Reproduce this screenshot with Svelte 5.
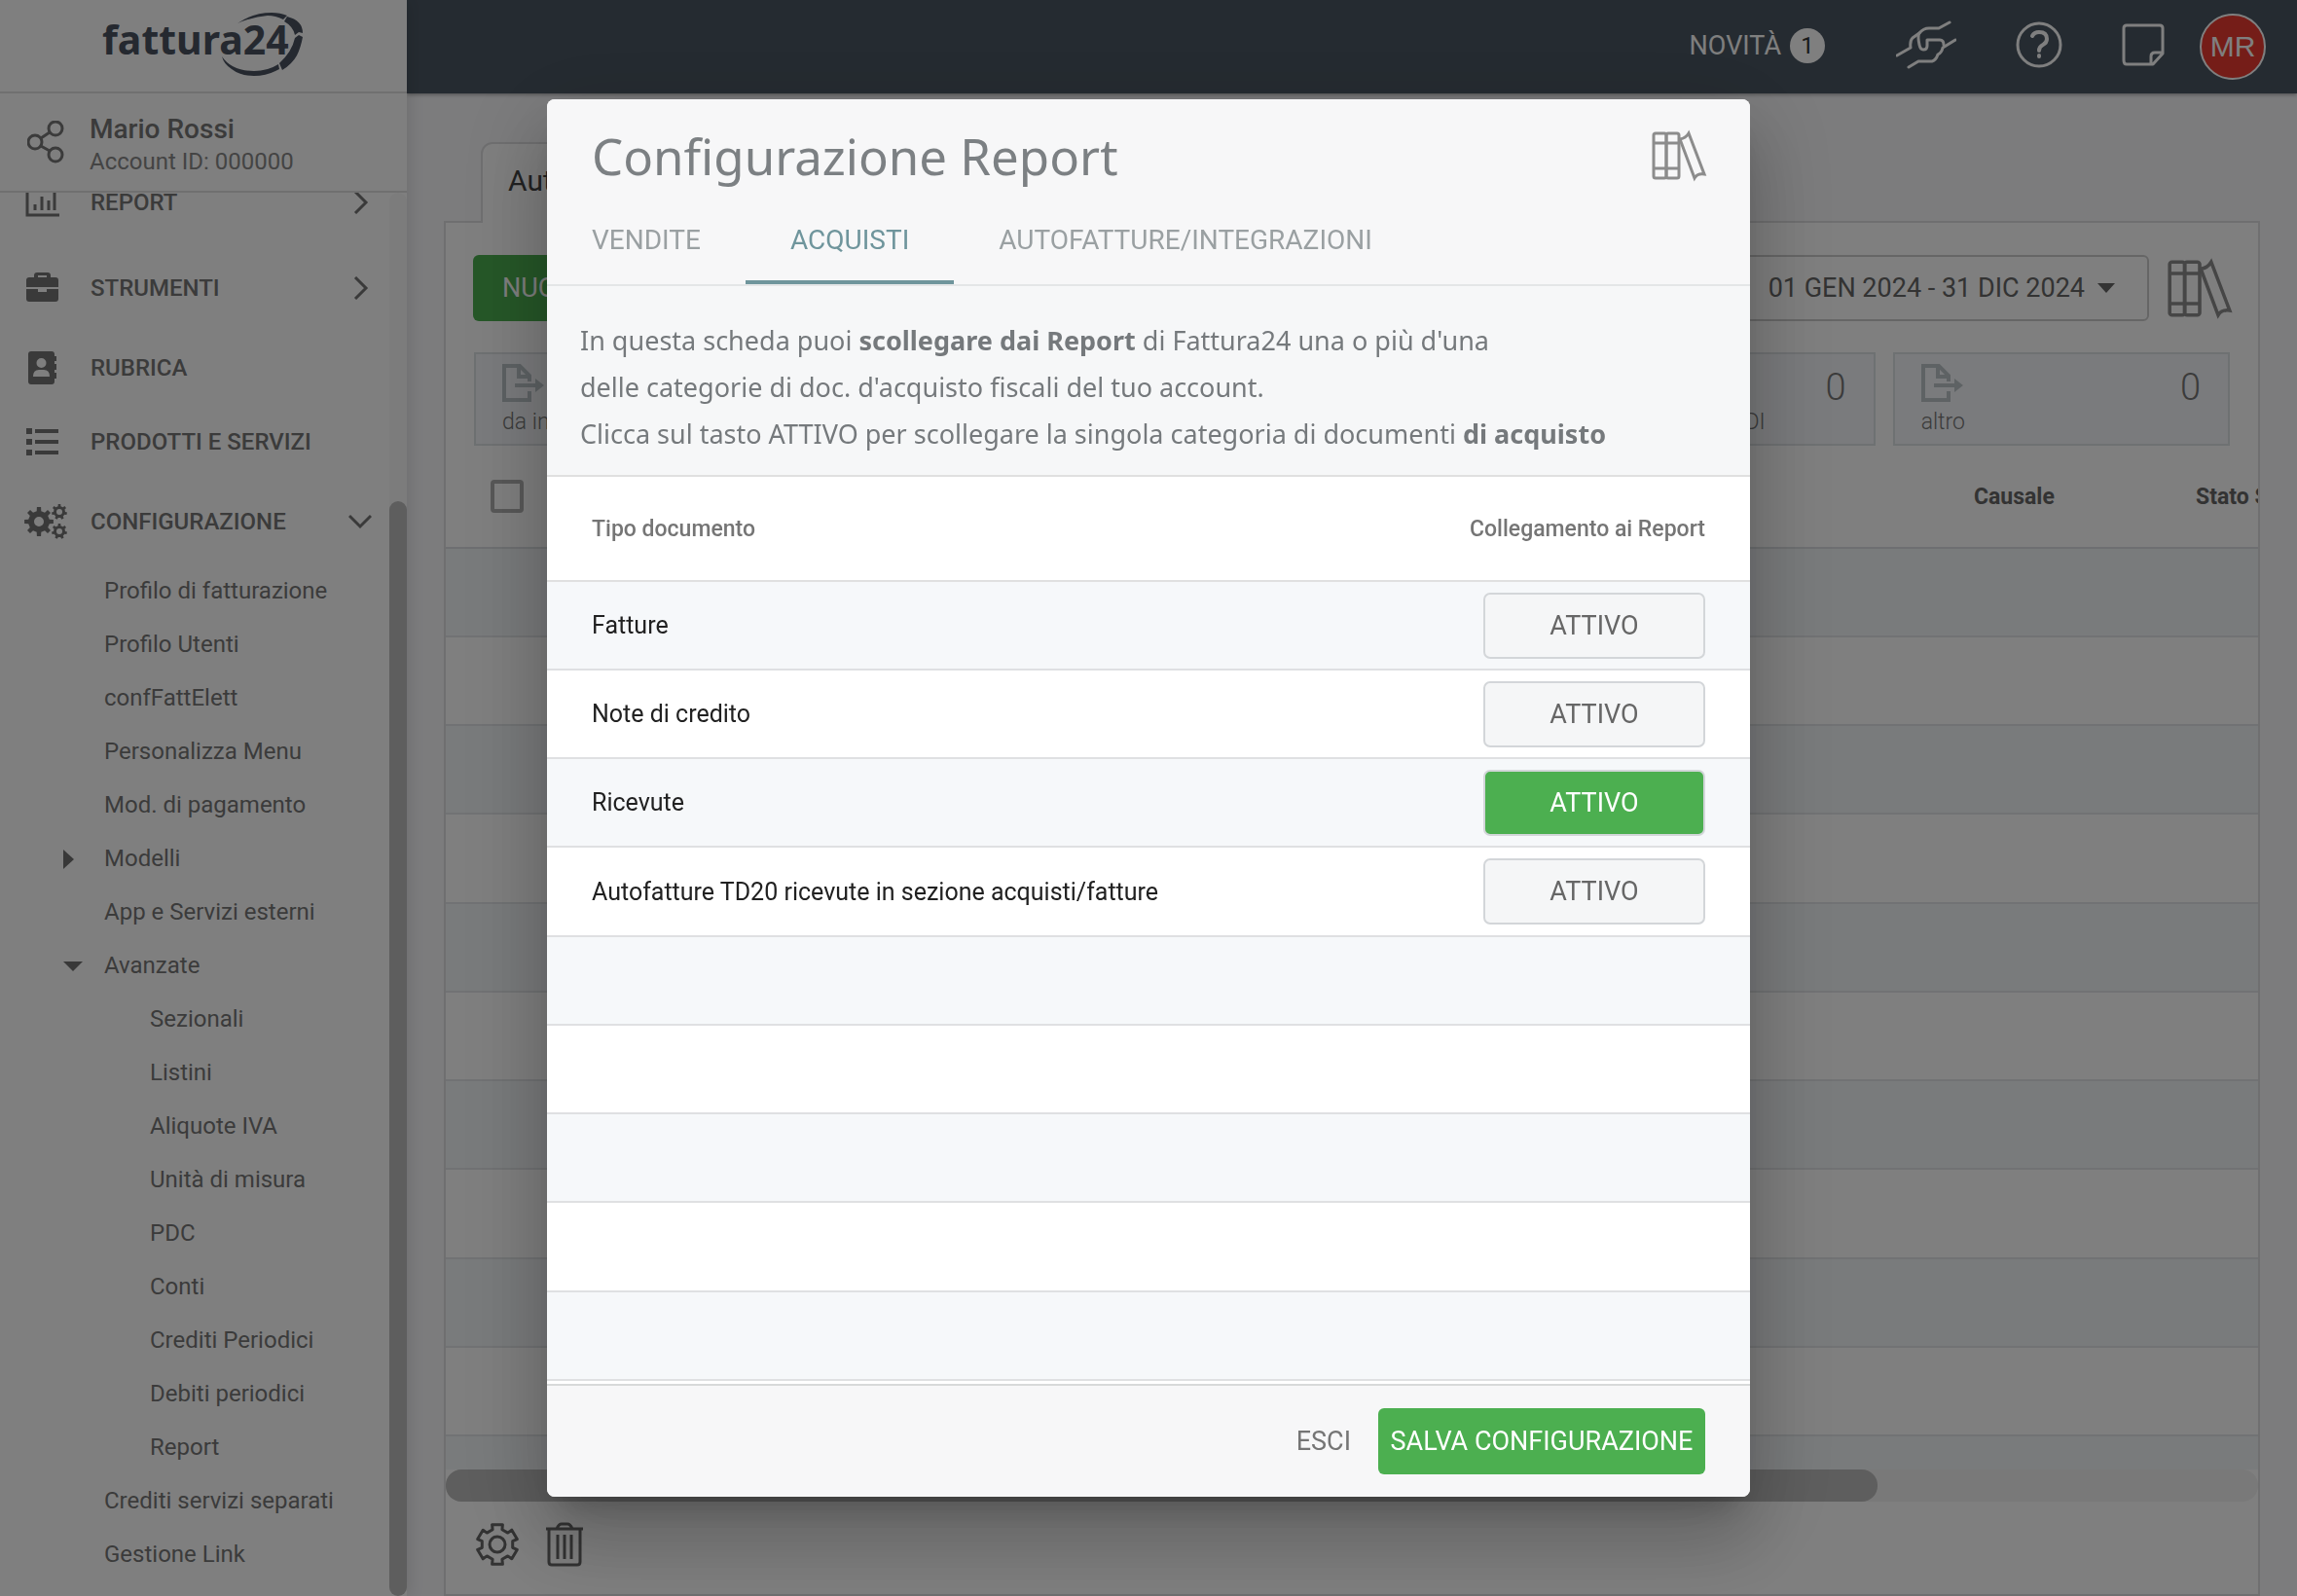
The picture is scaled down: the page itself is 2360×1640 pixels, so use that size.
<script lang="ts">
    interface DocType {
        label: string;
        active: boolean;
    }

    let tabs = ['VENDITE', 'ACQUISTI', 'AUTOFATTURE/INTEGRAZIONI'];
    let currentTab = $state('ACQUISTI');

    let docTypes: DocType[] = $state([
        { label: 'Fatture', active: false },
        { label: 'Note di credito', active: false },
        { label: 'Ricevute', active: true },
        { label: 'Autofatture TD20 ricevute in sezione acquisti/fatture', active: false },
    ]);

    // The table always shows at least nine rows
    let fillerRows = $derived(Array(Math.max(0, 9 - docTypes.length)).fill(0));

    const menu = [
        { label: 'REPORT', icon: 'chart', arrow: 'right' },
        { label: 'STRUMENTI', icon: 'case', arrow: 'right' },
        { label: 'RUBRICA', icon: 'book', arrow: '' },
        { label: 'PRODOTTI E SERVIZI', icon: 'list', arrow: '' },
        { label: 'CONFIGURAZIONE', icon: 'cogs', arrow: 'down' },
    ];

    const submenu = [
        { label: 'Profilo di fatturazione' },
        { label: 'Profilo Utenti' },
        { label: 'confFattElett' },
        { label: 'Personalizza Menu' },
        { label: 'Mod. di pagamento' },
        { label: 'Modelli', caret: 'right' },
        { label: 'App e Servizi esterni' },
        { label: 'Avanzate', caret: 'down' },
        { label: 'Sezionali', nested: true },
        { label: 'Listini', nested: true },
        { label: 'Aliquote IVA', nested: true },
        { label: 'Unità di misura', nested: true },
        { label: 'PDC', nested: true },
        { label: 'Conti', nested: true },
        { label: 'Crediti Periodici', nested: true },
        { label: 'Debiti periodici', nested: true },
        { label: 'Report', nested: true },
        { label: 'Crediti servizi separati' },
        { label: 'Gestione Link' },
    ];

    const counters = [
        { label: 'da inviare' },
        {},
        {},
        { label: 'in elaborazione - SDI', count: 0 },
        { label: 'altro', count: 0 },
    ];

    const emptyRows = Array(12).fill(0);

    // Outline of a toothed wheel, first tooth pointing up
    function gear(cx: number, cy: number, outer: number, inner: number, teeth: number, tip = 0.18, base = 0.27) {
        const step = (Math.PI * 2) / teeth;
        const points: string[] = [];
        for (let i = 0; i < teeth; i++) {
            const a = i * step - Math.PI / 2;
            for (const [r, d] of [
                [inner, -base],
                [outer, -tip],
                [outer, tip],
                [inner, base],
            ]) {
                const x = cx + r * Math.cos(a + d * step);
                const y = cy + r * Math.sin(a + d * step);
                points.push(`${x.toFixed(1)},${y.toFixed(1)}`);
            }
        }
        return 'M' + points.join('L') + 'Z';
    }

    function hole(cx: number, cy: number, r: number) {
        return `M${cx - r},${cy}a${r},${r} 0 1,0 ${2 * r},0a${r},${r} 0 1,0 ${-2 * r},0Z`;
    }
</script>

{#snippet binders(size)}
    <svg class="binders {size}" viewBox="0 0 54 48" aria-hidden="true">
        <rect x="1" y="1" width="13" height="46" rx="2" />
        <rect x="14" y="1" width="13" height="46" rx="2" />
        <path d="M1 11H27M1 37H27" />
        <path d="M28 7Q34 6 37 1L53 43Q46 42 43 47Z" />
    </svg>
{/snippet}

<div class="app">
    <aside class="sidebar">
        <div class="brand">
            <svg viewBox="0 0 210 70" role="img" aria-label="fattura24">
                <text x="5" y="48">fattura24</text>
                <path d="M144 16Q160 5 179 5Q188 5 195 8L191 12Q183 8 175 8Q160 9 144 16Z" />
                <path d="M195 9Q211 13 211 26L207 25L203 28Q201 19 192 14Z" />
                <path d="M203 31L207 28L211 30Q209 41 205 49Q200 58 190 64L187 57Q200 45 203 31Z" />
                <path d="M187 63L183 65Q173 70 161 70Q147 70 138 63Q130 58 128 50Q138 65 161 65Q175 65 186 58Z" />
            </svg>
        </div>
        <div class="account">
            <svg class="share" viewBox="0 0 38 44" aria-hidden="true">
                <circle cx="8" cy="22" r="7" />
                <circle cx="29" cy="8" r="7" />
                <circle cx="29" cy="35" r="7" />
                <path d="M14 18L23 12M14 26L23 31" />
            </svg>
            <div class="owner">
                <div class="name">Mario Rossi</div>
                <div class="id">Account ID: 000000</div>
            </div>
        </div>
        <div class="scroller">
            <nav>
                {#each menu as item}
                    <a class="item" class:tall={item.arrow} href="#{item.icon}">
                        <svg class="icon" viewBox="0 0 44 36" aria-hidden="true">
                            {#if item.icon === 'chart'}
                                <path class="line" d="M3 2V31H36M11 20V26M18 12V26M25 16V26M31 8V26" />
                            {:else if item.icon === 'case'}
                                <path d="M2 10Q2 7 5 7H10V5Q10 2 13 2H24Q27 2 27 5V7H32Q35 7 35 10V17H2ZM14 7H23V5H14Z" fill-rule="evenodd" />
                                <path d="M2 19H14V22H23V19H35V29Q35 32 32 32H5Q2 32 2 29Z" />
                            {:else if item.icon === 'book'}
                                <path fill-rule="evenodd" d="M7 1H28Q31 1 31 4V6H33V11H31V14H33V20H31V23H33V29H31V32Q31 35 28 35H7Q4 35 4 32V4Q4 1 7 1ZM17.500 8A5 5 0 1 0 17.500 18A5 5 0 1 0 17.500 8ZM9 27H26Q26 20 20 20H15Q9 20 9 27Z" />
                            {:else if item.icon === 'list'}
                                <path d="M2 4H8V10H2ZM2 15H8V21H2ZM2 26H8V32H2ZM11 5H35V9H11ZM11 16H35V20H11ZM11 27H35V31H11Z" />
                            {:else}
                                <path fill-rule="evenodd" d={gear(15, 18, 15, 11, 8) + hole(15, 18, 5)} />
                                <path fill-rule="evenodd" d={gear(36, 8, 8, 6, 7) + hole(36, 8, 3)} />
                                <path fill-rule="evenodd" d={gear(36, 28, 8, 6, 7) + hole(36, 28, 3)} />
                            {/if}
                        </svg>
                        <span>{item.label}</span>
                        {#if item.arrow}
                            <svg class="arrow" viewBox="0 0 24 24" aria-hidden="true">
                                <path d={item.arrow === 'right' ? 'M7 1L18 12L7 23' : 'M1 6L12 17L23 6'} />
                            </svg>
                        {/if}
                    </a>
                {/each}
                {#each submenu as item}
                    <a class="sub" class:nested={item.nested} href="#{item.label}">
                        {#if item.caret}
                            <svg class="caret" viewBox="0 0 20 20" aria-hidden="true">
                                <path d={item.caret === 'right' ? 'M0 0L11 10L0 20Z' : 'M0 5H20L10 15Z'} />
                            </svg>
                        {/if}
                        {item.label}
                    </a>
                {/each}
            </nav>
            <div class="track"><div class="thumb"></div></div>
        </div>
    </aside>

    <div class="page">
        <header class="topbar">
            <button class="news">NOVITÀ <span class="badge">1</span></button>
            <div class="actions">
                <button aria-label="Assistenza">
                    <svg width="62" height="50" viewBox="0 0 62 50">
                        <path d="M55 2L44 8H34Q28 8 24 13L17 18Q14 21 15 28L1 36" />
                        <path d="M24 13Q22 16 24 25Q25 30 28 30Q32 30 32 26V20H45Q49 20 49 25" />
                        <path d="M61 20L48 28Q47 33 43 35Q41 41 37 42H23L13 48" />
                    </svg>
                </button>
                <button aria-label="Aiuto">
                    <svg width="48" height="48" viewBox="0 0 48 48">
                        <circle cx="24" cy="24" r="22" />
                        <path class="bold" d="M17 15Q19 11 24 11Q32 11 32 18Q32 22 28 24Q24 26 24 30M24 35V36" />
                    </svg>
                </button>
                <button aria-label="Note">
                    <svg width="44" height="44" viewBox="0 0 44 44">
                        <path d="M5 2H39Q42 2 42 5V31L32 42H5Q2 42 2 38V5Q2 2 5 2ZM42 30H34Q30 30 30 34V42" />
                    </svg>
                </button>
            </div>
            <button class="avatar">MR</button>
        </header>

        <main>
            <h2 class="page-tab">Autofatture</h2>
            <section class="panel">
                <div class="toolbar">
                    <button class="new">NUOVO</button>
                    <button class="period">
                        01 GEN 2024 - 31 DIC 2024
                        <svg viewBox="0 0 20 10" aria-hidden="true"><path d="M1 0H19L10 10Z" /></svg>
                    </button>
                    {@render binders('large')}
                </div>
                <div class="counters">
                    {#each counters as counter}
                        <div class="counter">
                            {#if counter.label}
                                <div>
                                    <svg viewBox="0 0 44 40" aria-hidden="true">
                                        <path d="M28 28V37H2V2H18L28 12V18M17 2V13H28M13 22H36" />
                                        <path class="head" d="M34 15L43 22L34 29Z" />
                                    </svg>
                                    <div class="label">{counter.label}</div>
                                </div>
                                <div class="count">{counter.count}</div>
                            {/if}
                        </div>
                    {/each}
                </div>
                <div class="grid">
                    <table>
                        <thead>
                            <tr>
                                <th class="check"><input type="checkbox" aria-label="Seleziona tutto" /></th>
                                <th class="wide"></th>
                                <th class="cause">Causale</th>
                                <th>Stato SdI</th>
                            </tr>
                        </thead>
                        <tbody>
                            {#each emptyRows as _}
                                <tr><td colspan="4"></td></tr>
                            {/each}
                        </tbody>
                    </table>
                </div>
                <div class="hscroll"><div class="hthumb"></div></div>
                <div class="panel-foot">
                    <button aria-label="Impostazioni">
                        <svg width="46" height="46" viewBox="0 0 46 46">
                            <path d={gear(23, 23, 21, 16, 6, 0.25, 0.3)} />
                            <circle cx="23" cy="23" r="8" />
                        </svg>
                    </button>
                    <button aria-label="Elimina">
                        <svg width="38" height="46" viewBox="0 0 38 46">
                            <path d="M0 7H38M3 7V41Q3 44 6 44H32Q35 44 35 41V7M11 7Q13 2 16 2H22Q25 2 27 7M12 13V38M19 13V38M26 13V38" />
                        </svg>
                    </button>
                </div>
            </section>
        </main>
    </div>
</div>

<div class="overlay">
    <div class="dialog" role="dialog" aria-modal="true" aria-labelledby="dialog-title">
        <header>
            <div class="title">
                <h1 id="dialog-title">Configurazione Report</h1>
                {@render binders('small')}
            </div>
            <div class="tabs" role="tablist">
                {#each tabs as tab}
                    <button
                        role="tab"
                        aria-selected={tab === currentTab}
                        class:current={tab === currentTab}
                        onclick={() => (currentTab = tab)}
                    >
                        {tab}
                    </button>
                {/each}
            </div>
        </header>
        <p class="intro">
            In questa scheda puoi <b>scollegare dai Report</b> di Fattura24 una o più d'una<br />
            delle categorie di doc. d'acquisto fiscali del tuo account.<br />
            Clicca sul tasto ATTIVO per scollegare la singola categoria di documenti <b>di acquisto</b>
        </p>
        <table class="docs">
            <thead>
                <tr>
                    <th>Tipo documento</th>
                    <th class="link">Collegamento ai Report</th>
                </tr>
            </thead>
            <tbody>
                {#each docTypes as doc}
                    <tr>
                        <td>{doc.label}</td>
                        <td class="link">
                            <button class="toggle" class:on={doc.active} onclick={() => (doc.active = !doc.active)}>
                                ATTIVO
                            </button>
                        </td>
                    </tr>
                {/each}
                {#each fillerRows as _}
                    <tr><td colspan="2"></td></tr>
                {/each}
            </tbody>
        </table>
        <footer>
            <button class="cancel">ESCI</button>
            <button class="save">SALVA CONFIGURAZIONE</button>
        </footer>
    </div>
</div>

<style>
    :global(body) {
        margin: 0;
        font-family: Roboto, sans-serif;
        overflow: hidden;
    }

    * {
        box-sizing: border-box;
    }

    button {
        font: inherit;
        padding: 0;
        border: 0;
        background: none;
        color: inherit;
        cursor: pointer;
    }

    h1,
    h2,
    p {
        margin: 0;
        font-weight: 400;
    }

    a {
        color: inherit;
        text-decoration: none;
    }

    svg {
        display: block;
        flex: none;
    }

    table {
        border-collapse: separate;
        border-spacing: 0;
    }

    .app {
        display: flex;
        height: 100vh;
        background: #f8f8fb;
        color: #777;
    }

    /* sidebar */
    .sidebar {
        display: flex;
        flex-direction: column;
        flex: none;
        width: 418px;
        background: #fff;
        box-shadow: 2px 0 16px rgba(0, 0, 0, 0.12);
        z-index: 1;
    }

    .brand {
        height: 96px;
        flex: none;
        padding: 8px 0 0 100px;
        border-bottom: 2px solid #e0e0e0;
    }

    .brand svg {
        width: 210px;
        height: 70px;
        overflow: visible;
        fill: #4a5260;
    }

    .brand text {
        font: 700 41px 'Noto Sans', sans-serif;
    }

    .account {
        display: flex;
        align-items: center;
        gap: 26px;
        height: 102px;
        flex: none;
        padding-left: 28px;
        border-bottom: 2px solid #e0e0e0;
    }

    .share {
        width: 38px;
        height: 44px;
        fill: none;
        stroke: #777;
        stroke-width: 3;
    }

    .owner {
        padding-top: 6px;
    }

    .name {
        font-size: 28px;
        font-weight: 500;
        line-height: 34px;
    }

    .id {
        font-size: 24px;
        line-height: 32px;
        color: #888;
    }

    .scroller {
        display: flex;
        flex: 1;
        min-height: 0;
        overflow: hidden;
    }

    nav {
        flex: 1;
        margin-top: -34px;
        font-size: 24px;
    }

    .item {
        display: flex;
        align-items: center;
        height: 76px;
        padding: 0 18px 0 25px;
        font-weight: 500;
    }

    .item.tall {
        height: 88px;
    }

    .item span {
        flex: 1;
    }

    .icon {
        width: 44px;
        height: 36px;
        margin-right: 24px;
        fill: #757575;
    }

    .icon .line {
        fill: none;
        stroke: #757575;
        stroke-width: 3;
    }

    .arrow {
        width: 24px;
        height: 24px;
        fill: none;
        stroke: #757575;
        stroke-width: 3;
    }

    .sub {
        position: relative;
        display: block;
        padding-left: 107px;
        line-height: 55px;
        white-space: nowrap;
    }

    .sub.nested {
        padding-left: 154px;
    }

    .caret {
        position: absolute;
        left: 65px;
        top: 18px;
        width: 20px;
        height: 20px;
        fill: #707070;
    }

    .track {
        display: flex;
        flex-direction: column;
        justify-content: flex-end;
        width: 18px;
        background: #f8f8f8;
        border-radius: 9px;
    }

    .thumb {
        height: 78%;
        border-radius: 9px;
        background: #bcbcbc;
    }

    /* top bar */
    .page {
        display: flex;
        flex-direction: column;
        flex: 1;
        min-width: 0;
    }

    .topbar {
        display: flex;
        align-items: center;
        justify-content: flex-end;
        gap: 36px;
        height: 96px;
        flex: none;
        padding-right: 32px;
        background: #4b5763;
        box-shadow: 0 1px 4px rgba(0, 0, 0, 0.4);
        color: #fff;
        font-size: 27px;
    }

    .news {
        display: flex;
        align-items: center;
        gap: 9px;
        margin-right: 37px;
        padding-bottom: 2px;
    }

    .badge {
        width: 36px;
        height: 36px;
        border-radius: 50%;
        background: #fff;
        color: #333;
        font-size: 24px;
        line-height: 36px;
    }

    .actions {
        display: flex;
        align-items: center;
        gap: 61px;
        padding-bottom: 4px;
    }

    .actions svg {
        fill: none;
        stroke: #fff;
        stroke-width: 3;
        stroke-linecap: round;
        stroke-linejoin: round;
    }

    .actions .bold {
        stroke-width: 4;
    }

    .avatar {
        width: 68px;
        height: 68px;
        border: 2px solid #fff;
        border-radius: 50%;
        background: #ea3a30;
        font-family: 'Liberation Sans', sans-serif;
        font-size: 30px;
    }

    /* document list */
    main {
        display: flex;
        flex-direction: column;
        align-items: flex-start;
        flex: 1;
        min-height: 0;
        padding: 50px 38px 0;
    }

    .page-tab {
        z-index: 1;
        height: 83px;
        margin: 0 0 -2px 38px;
        padding: 0 26px;
        border: 2px solid #dedee0;
        border-bottom: 0;
        border-radius: 12px 12px 0 0;
        background: #fff;
        color: #444;
        font-size: 30px;
        line-height: 76px;
    }

    .panel {
        display: flex;
        flex-direction: column;
        flex: 1;
        min-height: 0;
        width: 100%;
        border: 2px solid #dedee0;
        background: #fff;
    }

    .toolbar {
        display: flex;
        align-items: center;
        gap: 20px;
        padding: 33px 28px 32px;
        font-size: 27px;
    }

    .new {
        height: 68px;
        margin-right: auto;
        padding: 0 30px;
        border-radius: 6px;
        background: #4caf50;
        color: #fff;
    }

    .period {
        display: flex;
        align-items: center;
        gap: 12px;
        height: 68px;
        padding: 0 32px;
        border: 2px solid #ccc;
        border-radius: 6px;
        color: #666;
    }

    .period svg {
        width: 20px;
        height: 10px;
        fill: #666;
    }

    .binders {
        fill: none;
        stroke: #8c8c8c;
        stroke-width: 3;
        overflow: visible;
    }

    .binders.small {
        width: 54px;
        height: 48px;
    }

    .binders.large {
        width: 64px;
        height: 57px;
    }

    .counters {
        display: flex;
        gap: 18px;
        padding: 0 29px;
    }

    .counter {
        display: flex;
        justify-content: space-between;
        flex: 1;
        height: 96px;
        padding: 10px 28px 0 27px;
        border: 2px solid #dde2e5;
        background: #f5f7fa;
    }

    .counter svg {
        width: 44px;
        height: 40px;
        fill: none;
        stroke: #bcc5c9;
        stroke-width: 4;
    }

    .counter .head {
        fill: #bcc5c9;
        stroke: none;
    }

    .label {
        font-size: 23px;
        font-weight: 300;
        line-height: 40px;
        white-space: nowrap;
    }

    .count {
        font-size: 38px;
        font-weight: 300;
        line-height: 48px;
    }

    .grid {
        flex: 1;
        min-height: 0;
        overflow: hidden;
    }

    .grid table {
        width: 125%;
        table-layout: fixed;
    }

    .grid th {
        height: 106px;
        padding: 0;
        border-bottom: 2px solid #dcdfe2;
        color: #666;
        font-size: 23px;
        font-weight: 700;
        text-align: left;
    }

    .grid .check {
        width: 110px;
        padding-left: 46px;
    }

    .grid .wide {
        width: 1460px;
    }

    .grid .cause {
        width: 228px;
    }

    .grid td {
        height: 91px;
        padding: 0;
        border-bottom: 2px solid #e2e5e8;
    }

    .grid tbody tr:nth-child(odd) {
        background: #f3f6f9;
    }

    .check input {
        display: block;
        appearance: none;
        width: 34px;
        height: 34px;
        margin: 0;
        border: 4px solid #b0b0b0;
        border-radius: 4px;
    }

    .hscroll {
        height: 33px;
        flex: none;
        border-radius: 16px;
        background: #f2f2f2;
    }

    .hthumb {
        width: 79%;
        height: 100%;
        border-radius: 16px;
        background: #bcbcbc;
    }

    .panel-foot {
        display: flex;
        align-items: center;
        gap: 27px;
        height: 95px;
        flex: none;
        padding: 0 0 8px 30px;
    }

    .panel-foot svg {
        fill: none;
        stroke: #666;
        stroke-width: 3;
        stroke-linejoin: round;
    }

    /* dialog */
    .overlay {
        position: fixed;
        inset: 0;
        z-index: 10;
        display: flex;
        align-items: center;
        justify-content: center;
        background: rgba(0, 0, 0, 0.5);
    }

    .dialog {
        width: 1236px;
        max-width: 90vw;
        overflow: hidden;
        border-radius: 8px;
        background: #fff;
        box-shadow:
            0 22px 30px -14px rgba(0, 0, 0, 0.2),
            0 48px 76px 6px rgba(0, 0, 0, 0.14),
            0 18px 92px 16px rgba(0, 0, 0, 0.12);
        color: #757575;
    }

    .dialog header {
        border-bottom: 2px solid #e4e6e7;
        background: #f7f7f8;
    }

    .title {
        display: flex;
        align-items: center;
        justify-content: space-between;
        height: 100px;
        padding: 16px 46px 0;
    }

    h1 {
        color: #7c8083;
        font-family: 'Noto Sans', sans-serif;
        font-size: 51px;
        line-height: 72px;
    }

    .tabs {
        display: flex;
    }

    .tabs button {
        height: 90px;
        padding: 2px 46px 0;
        border-bottom: 4px solid transparent;
        color: #9aa0a2;
        font-size: 28px;
    }

    .tabs .current {
        border-bottom-color: #6f959c;
        color: #6f959c;
    }

    .intro {
        padding: 32px 34px 18px;
        border-bottom: 2px solid #e0e0e0;
        background: #f6f7f8;
        color: #75797c;
        font-family: 'Noto Sans', sans-serif;
        font-size: 27px;
        line-height: 48px;
        white-space: nowrap;
    }

    .docs {
        width: 100%;
        margin-bottom: 3px;
    }

    .docs th {
        height: 108px;
        padding: 0 46px;
        border-bottom: 2px solid #e0e0e0;
        font-size: 23px;
        font-weight: 500;
        text-align: left;
    }

    .docs td {
        height: 91px;
        padding: 0 46px;
        border-bottom: 2px solid #dfe0e2;
        color: #212121;
        font-size: 25px;
    }

    .docs tr:nth-child(4n) td,
    .grid tr:nth-child(4n) td {
        height: 92px;
    }

    .docs tbody tr:nth-child(odd) {
        background: #f6f8fa;
    }

    .docs .link {
        text-align: right;
    }

    .toggle {
        display: block;
        width: 228px;
        height: 68px;
        margin-left: auto;
        border: 2px solid #d3d6d9;
        border-radius: 7px;
        background: #f5f6f7;
        color: #666;
        font-size: 27px;
    }

    .toggle.on {
        background: #4caf50;
        color: #fff;
    }

    .dialog footer {
        display: flex;
        align-items: center;
        justify-content: flex-end;
        gap: 28px;
        height: 116px;
        padding: 0 46px;
        border-top: 2px solid #d8d9d9;
        background: #f7f7f8;
        font-size: 27px;
    }

    .save {
        width: 336px;
        height: 68px;
        border-radius: 6px;
        background: #4caf50;
        color: #fff;
        white-space: nowrap;
    }
</style>
